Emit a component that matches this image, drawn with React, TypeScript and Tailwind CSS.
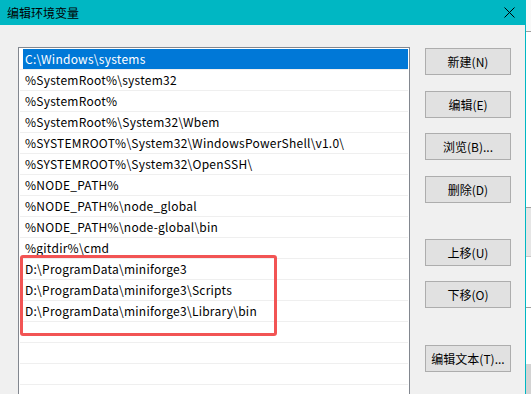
import React from "react";

const rows = [
  "C:\\Windows\\systems",
  "%SystemRoot%\\system32",
  "%SystemRoot%",
  "%SystemRoot%\\System32\\Wbem",
  "%SYSTEMROOT%\\System32\\WindowsPowerShell\\v1.0\\",
  "%SYSTEMROOT%\\System32\\OpenSSH\\",
  "%NODE_PATH%",
  "%NODE_PATH%\\node_global",
  "%NODE_PATH%\\node-global\\bin",
  "%gitdir%\\cmd",
  "D:\\ProgramData\\miniforge3",
  "D:\\ProgramData\\miniforge3\\Scripts",
  "D:\\ProgramData\\miniforge3\\Library\\bin",
  "",
  "",
  "",
  "",
];

const font = { fontFamily: '"Noto Sans CJK SC", "Noto Sans", sans-serif' };

function Btn({ label, className = "" }: { label: string; className?: string }) {
  return (
    <div
      className={
        "shrink-0 h-[27px] w-[86px] bg-[#e1e1e1] border border-[#adadad] flex items-center justify-center text-[12px] text-black leading-none " +
        className
      }
    >
      {label}
    </div>
  );
}

export default function App() {
  return (
    <div className="w-[531px] h-[394px] overflow-hidden flex" style={font}>
      <div className="w-[525px] h-[394px] flex flex-col bg-[#f0f0f0] overflow-hidden">
        <div className="shrink-0 h-[25px] bg-[#00b7c3] flex items-center justify-between pl-[7px] pr-[10px]">
          <span className="text-[12px] text-black leading-none">编辑环境变量</span>
          <svg width="11" height="11" viewBox="0 0 11 11">
            <path d="M0.5 0.5 L10.5 10.5 M10.5 0.5 L0.5 10.5" stroke="#000" strokeWidth="1" />
          </svg>
        </div>
        <div className="flex flex-1 min-h-0 relative">
          <div className="ml-[18px] mt-[22px] w-[392px] min-h-0 bg-white border-l border-t border-r border-[#82878f] pt-[1px] px-[1px] overflow-hidden">
            {rows.map((r, i) => (
              <div key={i} className="h-[21px] border-b border-[#efefef] flex">
                <div
                  className={
                    "ml-[3px] flex-1 h-[20px] pl-[2px] flex items-center text-[12px] tracking-[0.25px] leading-none whitespace-nowrap " +
                    (i === 0 ? "bg-[#0078d7] text-white" : "text-black")
                  }
                >
                  {r}
                </div>
              </div>
            ))}
          </div>
          <div className="ml-[15px] mt-[23px] flex flex-col">
            <Btn label="新建(N)" />
            <Btn label="编辑(E)" className="mt-[16px]" />
            <Btn label="浏览(B)..." className="mt-[15px]" />
            <Btn label="删除(D)" className="mt-[16px]" />
            <Btn label="上移(U)" className="mt-[36px]" />
            <Btn label="下移(O)" className="mt-[15px]" />
            <Btn label="编辑文本(T)..." className="mt-[37px]" />
          </div>
          <div className="absolute left-[20px] top-[230px] w-[257px] h-[81px] border-[3px] border-[#f25454] rounded-[3px]" />
        </div>
      </div>
      <div className="w-[1px] bg-[#00b7c3]" />
      <div className="w-[5px] flex flex-col bg-white">
        <div className="h-[31px] bg-[#f9f9f9]" />
        <div className="h-[1px] bg-[#a0a0a0]" />
        <div className="h-[175px] bg-white" />
        <div className="h-[1px] bg-[#a0a0a0]" />
        <div className="h-[48px] bg-[#e6e6e6]" />
        <div className="h-[1px] bg-[#c8c8c8]" />
        <div className="h-[50px] bg-white" />
        <div className="h-[1px] bg-[#a0a0a0]" />
        <div className="h-[56px] bg-white" />
        <div className="flex-1 bg-[#d4d4d4]" />
      </div>
    </div>
  );
}
